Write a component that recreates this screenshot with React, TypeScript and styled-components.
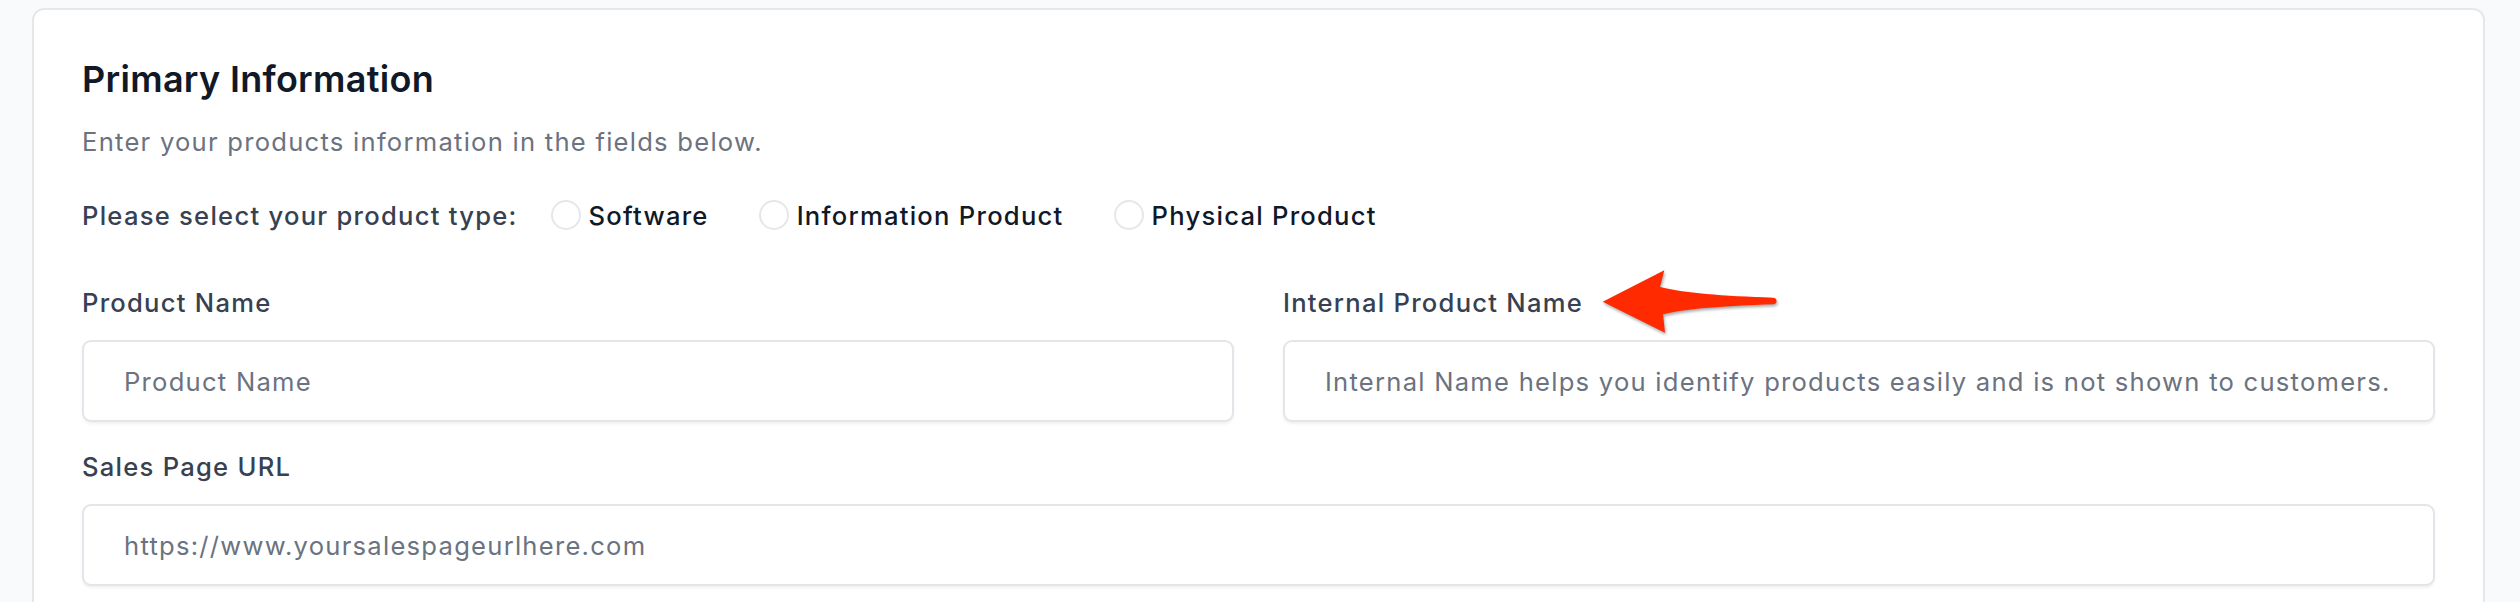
import React from "react";
import styled, { createGlobalStyle } from "styled-components";

const GlobalStyle = createGlobalStyle`
  html, body {
    margin: 0;
    padding: 0;
    background: #f9fafb;
    font-family: Inter, "Noto Sans", "Liberation Sans", sans-serif;
  }
  * { box-sizing: border-box; }
`;

const Page = styled.div`
  padding: 8px 35px 0 32px;
  height: 602px;
  overflow: hidden;
`;

const Card = styled.section`
  background: #ffffff;
  border: 2px solid #e5e7eb;
  border-radius: 12px;
  padding: 45px 48px 60px 48px;
`;

const Title = styled.h2`
  margin: 0;
  font-size: 36px;
  line-height: 48px;
  font-weight: 600;
  color: #111827;
  letter-spacing: 0.3px;
`;

const Subtitle = styled.p`
  margin: 20px 0 0 0;
  font-size: 25.6px;
  line-height: 38px;
  color: #6b7280;
  letter-spacing: 1.25px;
`;

const TypeRow = styled.div`
  margin-top: 35px;
  display: flex;
  align-items: center;
  height: 38px;
  letter-spacing: 1.25px;
`;

const TypeLabel = styled.span`
  font-size: 25.6px;
  font-weight: 500;
  color: #374151;
  margin-right: 33px;
`;

const Option = styled.label`
  display: flex;
  align-items: center;
  gap: 8px;
  margin-right: 50px;
  font-size: 25.6px;
  font-weight: 500;
  color: #111827;
  cursor: pointer;
`;

const Circle = styled.span`
  width: 30px;
  height: 30px;
  border-radius: 50%;
  border: 2px solid #e5e7eb;
  background: #ffffff;
  flex: none;
`;

const Grid = styled.div`
  margin-top: 50px;
  display: grid;
  grid-template-columns: 1fr 1fr;
  column-gap: 49px;
`;

const Field = styled.div<{ $full?: boolean }>`
  display: flex;
  flex-direction: column;
  grid-column: ${(p) => (p.$full ? "1 / -1" : "auto")};
  margin-top: ${(p) => (p.$full ? "26px" : "0")};
`;

const LabelWrap = styled.div`
  position: relative;
  height: 38px;
  margin-bottom: 18px;
`;

const Label = styled.span`
  font-size: 25.6px;
  line-height: 38px;
  font-weight: 500;
  color: #374151;
  letter-spacing: 1.25px;
`;

const Input = styled.div`
  height: 82px;
  border: 2px solid #e2e5e9;
  border-radius: 9px;
  background: #ffffff;
  box-shadow: 0 2px 3px rgba(17, 24, 39, 0.06);
  display: flex;
  align-items: center;
  padding: 0 40px;
  font-size: 25.6px;
  letter-spacing: 1.25px;
  color: #6b7280;
  white-space: nowrap;
  overflow: hidden;
`;

const ArrowSvg = styled.svg`
  position: absolute;
  left: 313px;
  top: -21px;
  width: 190px;
  height: 80px;
  overflow: visible;
  filter: drop-shadow(1px 2px 1.5px rgba(0, 0, 0, 0.35));
`;

const Arrow = () => (
  <ArrowSvg viewBox="1595 262 190 80">
    <path
      fill="#ff2a00"
      d="M1601.7,300.7 L1663.3,269.3 L1659,286 C1682,292 1722,295 1772,296.7 C1776.8,297 1776.8,303 1772,303.3 C1722,305 1686,307.5 1662,313.3 L1664,331.7 Z"
    />
  </ArrowSvg>
);

export default function App() {
  return (
    <>
      <GlobalStyle />
      <Page>
        <Card>
          <Title>Primary Information</Title>
          <Subtitle>Enter your products information in the fields below.</Subtitle>
          <TypeRow>
            <TypeLabel>Please select your product type:</TypeLabel>
            {["Software", "Information Product", "Physical Product"].map((o) => (
              <Option key={o}>
                <Circle />
                {o}
              </Option>
            ))}
          </TypeRow>
          <Grid>
            <Field>
              <LabelWrap>
                <Label>Product Name</Label>
              </LabelWrap>
              <Input>Product Name</Input>
            </Field>
            <Field>
              <LabelWrap>
                <Label>Internal Product Name</Label>
                <Arrow />
              </LabelWrap>
              <Input>
                Internal Name helps you identify products easily and is not shown to customers.
              </Input>
            </Field>
            <Field $full>
              <LabelWrap>
                <Label>Sales Page URL</Label>
              </LabelWrap>
              <Input>https://www.yoursalespageurlhere.com</Input>
            </Field>
          </Grid>
        </Card>
      </Page>
    </>
  );
}
